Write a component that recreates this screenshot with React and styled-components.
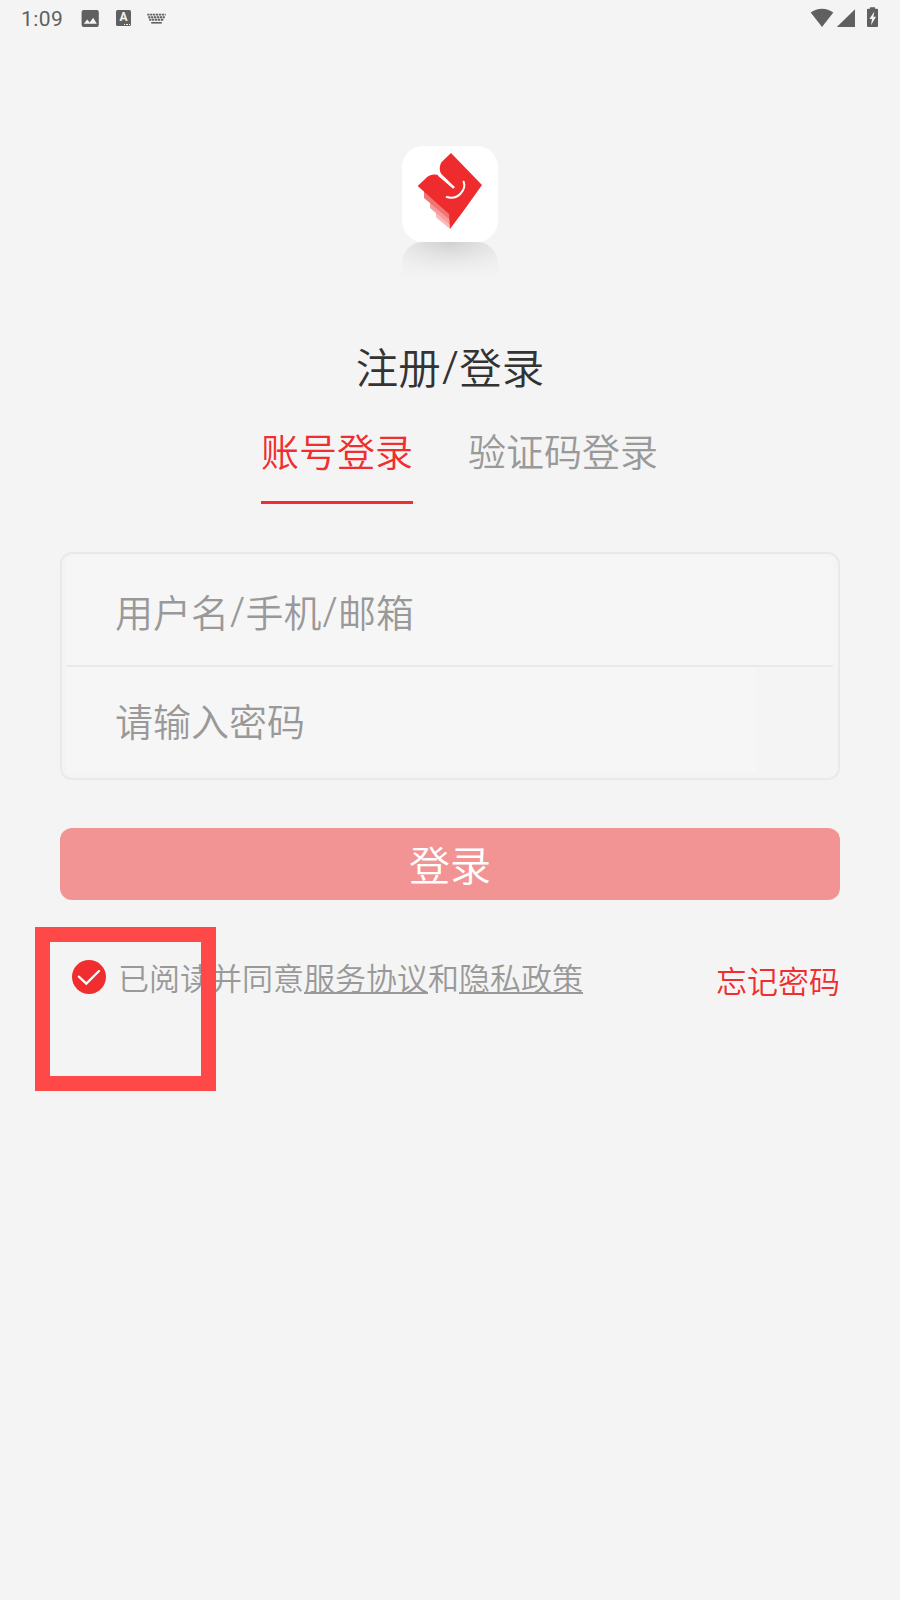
import React, { useState } from 'react';
import styled, { createGlobalStyle } from 'styled-components';

const LoginPage = () => {
  const [tab, setTab] = useState('account');
  const [agreed, setAgreed] = useState(true);
  const [account, setAccount] = useState('');
  const [password, setPassword] = useState('');

  return (
    <Page>
      <GlobalStyle />
      <StatusBar>
        <StatusGroup>
          <Clock>1:09</Clock>
          <PictureIcon />
          <LetterIcon />
          <KeyboardIcon />
        </StatusGroup>
        <SignalIcons />
      </StatusBar>

      <Logo>
        <LogoMark />
      </Logo>
      <LogoShadow />

      <Title>注册<Slash>/</Slash>登录</Title>

      <Tabs>
        <Tab type="button" $active={tab === 'account'} onClick={() => setTab('account')}>账号登录</Tab>
        <Tab type="button" $active={tab === 'code'} onClick={() => setTab('code')}>验证码登录</Tab>
      </Tabs>

      <Form onSubmit={(e) => e.preventDefault()}>
        <Fields>
          <Field>
            <Input type="text" value={account} onChange={(e) => setAccount(e.target.value)} />
            {!account && <Hint>用户名<Slash>/</Slash>手机<Slash>/</Slash>邮箱</Hint>}
          </Field>
          <Divider />
          <Field $short>
            <Input type="password" value={password} onChange={(e) => setPassword(e.target.value)} />
            {!password && <Hint>请输入密码</Hint>}
          </Field>
        </Fields>
        <SubmitButton type="submit">登录</SubmitButton>
      </Form>

      <Footer>
        <Agreement>
          <Check type="button" aria-pressed={agreed} onClick={() => setAgreed(!agreed)}>
            <svg width="34" height="34" viewBox="0 0 34 34">
              <circle cx="17" cy="17" r="17" fill={agreed ? '#f02d2f' : '#cccccc'} />
              <path d="M6.8 16.6 14.3 23.6 27 11" fill="none" stroke="#fff" strokeWidth="2.2" strokeLinecap="round" />
            </svg>
          </Check>
          <AgreementText>
            已阅读并同意<Link>服务协议</Link>和<Link>隐私政策</Link>
          </AgreementText>
          <Highlight />
        </Agreement>
        <Forgot>忘记密码</Forgot>
      </Footer>
    </Page>
  );
};

const PictureIcon = () => (
  <svg width="18" height="18" viewBox="0 0 18 18">
    <rect x="0.6" y="0.9" width="17.2" height="17" rx="2" fill="#606060" />
    <path d="M2.8 14.8 6.2 10.4 8.7 13.4 12.2 8.8 15.8 14.8Z" fill="#f4f4f4" />
  </svg>
);

// 输入法图标
const LetterIcon = () => (
  <LetterBox>
    A
    <Dots>
      <i />
      <i />
      <i />
    </Dots>
  </LetterBox>
);

const KeyboardIcon = () => (
  <svg width="19" height="11" viewBox="0 0 19 11">
    <g stroke="#606060" strokeWidth="1.9" strokeDasharray="2.2 0.7">
      <path d="M0.3 1.6H18.7" />
      <path d="M1.2 4.2H17.8" />
      <path d="M2.2 6.8H17" />
    </g>
    <path d="M4.2 9.8H14.8" stroke="#606060" strokeWidth="1.6" />
  </svg>
);

const SignalIcons = () => (
  <svg width="70" height="22" viewBox="0 0 70 22">
    <g fill="#606060">
      <path d="M0.7 5.6C7 0.3 17 0.3 23.3 5.6L12 20Z" />
      <path d="M45 2.2V20H26.8Z" />
      <path d="M60 0.2H65V1.8H67Q68 1.8 68 2.8V19Q68 20 67 20H58Q57 20 57 19V2.8Q57 1.8 58 1.8H60Z" />
    </g>
    <path d="M64.3 4.6 59.4 12H62L61 18.2 66 9.8H63.4Z" fill="#f4f4f4" />
  </svg>
);

const LogoMark = () => (
  <svg width="96" height="96" viewBox="0 0 288 288">
    <path d="M102 190 144 214V249L102 214Z" fill="#f9b9b9" />
    <path d="M84 165 144 204V236L84 186Z" fill="#f79b9b" />
    <path d="M66 130 144 200V222L66 156Z" fill="#f37474" />
    <path
      d="M147 21 240 117 186 193 144 249 141 204 47 120 70 98Q79 87 91 86C105 85 112 87 119 93L155 126 158 123 119 85C111 76 112 58 119 48Z"
      fill="#ee2c2e"
    />
    <path d="M111 87 154 124" stroke="#fff" strokeWidth="7" strokeLinecap="round" />
    <path d="M185 107C193 130 170 163 134 153" fill="none" stroke="#fff" strokeWidth="6" strokeLinecap="round" />
  </svg>
);

const GlobalStyle = createGlobalStyle`
  body {
    margin: 0;
    background: #f4f4f4;
  }

  *, *::before, *::after {
    box-sizing: border-box;
  }

  button, input {
    font-family: inherit;
    font-weight: inherit;
  }
`;

const Page = styled.div`
  display: flex;
  flex-direction: column;
  align-items: center;
  width: 900px;
  height: 1600px;
  background-color: #f4f4f4;
  font-family: "Noto Sans CJK SC", sans-serif;
  font-weight: 350;
`;

const StatusBar = styled.div`
  display: flex;
  justify-content: space-between;
  align-items: center;
  width: 100%;
  height: 36px;
  padding: 0 20px 0 21px;
`;

const StatusGroup = styled.div`
  display: flex;
  align-items: center;
`;

const Clock = styled.span`
  width: 60px;
  padding-top: 1px;
  color: #606060;
  font-family: Roboto, sans-serif;
  font-size: 21px;
  font-weight: 400;
  line-height: 36px;
  letter-spacing: 0.4px;
`;

const LetterBox = styled.span`
  display: flex;
  flex-direction: column;
  align-items: center;
  width: 15px;
  height: 16px;
  margin: 0 16px 0 17px;
  border-radius: 1.5px;
  background-color: #606060;
  color: #f4f4f4;
  font: bold 12px/14px Roboto, sans-serif;
`;

const Dots = styled.span`
  display: flex;
  align-self: flex-end;
  gap: 1px;
  margin-right: 1px;

  i {
    width: 1.3px;
    height: 1.3px;
    background-color: #f4f4f4;
  }
`;

const Logo = styled.div`
  width: 96px;
  height: 96px;
  margin-top: 110px;
  border-radius: 21px;
  background-color: white;
`;

// 图标下方的倒影
const LogoShadow = styled.div`
  width: 96px;
  height: 38px;
  border-radius: 21px 21px 0 0;
  background: linear-gradient(rgba(244, 244, 244, 0), #f4f4f4 95%),
    radial-gradient(ellipse 52px 44px at 50% 0, #d0d0d0, #e9e9e9);
`;

const Title = styled.h1`
  height: 64px;
  margin: 54px 0 0;
  color: #333;
  font-size: 42.5px;
  font-weight: inherit;
  line-height: 64px;
`;

const Slash = styled.span`
  font-family: "Noto Sans", sans-serif;
  font-size: 1.09em;
  line-height: 1;
  margin: 0 0.025em;
`;

const Tabs = styled.div`
  display: flex;
  gap: 55px;
  margin: 22px 0 0 19px;
`;

const Tab = styled.button`
  height: 84px;
  padding: 0 0 23px;
  border: none;
  border-bottom: 3px solid ${(props) => (props.$active ? '#f02d2f' : 'transparent')};
  background: none;
  color: ${(props) => (props.$active ? '#f02d2f' : '#999')};
  font-size: 38px;
  line-height: 55px;
  cursor: pointer;
`;

const Form = styled.form`
  width: 780px;
  margin-top: 48px;
`;

const Fields = styled.div`
  height: 228px;
  padding: 3px 5px;
  border: 2px solid #e9e9e9;
  border-radius: 12px;
`;

const Field = styled.label`
  display: grid;
  width: ${(props) => (props.$short ? '689px' : '766px')};
  height: ${(props) => (props.$short ? '106px' : '108px')};
  background-color: #f6f6f6;
`;

// 输入框和提示文字叠在同一个网格里
const Input = styled.input`
  grid-area: 1 / 1;
  width: 100%;
  padding: 0 48px;
  border: none;
  outline: none;
  background: none;
  color: #333;
  font-size: 38px;
`;

const Hint = styled.span`
  grid-area: 1 / 1;
  align-self: center;
  height: 56px;
  margin-top: -1px;
  padding: 0 48px;
  color: #999;
  font-size: 38px;
  line-height: 56px;
  pointer-events: none;
`;

const Divider = styled.div`
  height: 2px;
  background-color: #e9e9e9;
`;

const SubmitButton = styled.button`
  display: block;
  width: 100%;
  height: 72px;
  margin-top: 48px;
  padding: 0 0 2px;
  border: none;
  border-radius: 12px;
  background-color: #f29493;
  color: white;
  font-size: 41px;
  line-height: 70px;
  cursor: pointer;
`;

const Footer = styled.div`
  display: flex;
  justify-content: space-between;
  align-items: flex-start;
  width: 780px;
  margin-top: 54px;
  font-size: 31px;
  line-height: 46px;
`;

const Agreement = styled.div`
  position: relative;
  display: flex;
  align-items: center;
  padding-left: 12px;
`;

const Check = styled.button`
  width: 34px;
  height: 34px;
  margin-right: 12px;
  padding: 0;
  border: none;
  background: none;
  cursor: pointer;

  svg {
    display: block;
  }
`;

const AgreementText = styled.span`
  color: #999;
`;

const Link = styled.a`
  text-decoration: underline;
  text-decoration-thickness: 2px;
  text-underline-offset: 2px;
  text-decoration-skip-ink: none;
`;

// 标出勾选框的红色方框
const Highlight = styled.div`
  position: absolute;
  top: -27px;
  left: -24.7px;
  width: 181px;
  height: 164px;
  border: 15px solid #ff4848;
  pointer-events: none;
`;

const Forgot = styled.a`
  margin-top: 3px;
  color: #f02d2f;
`;

export default LoginPage;
